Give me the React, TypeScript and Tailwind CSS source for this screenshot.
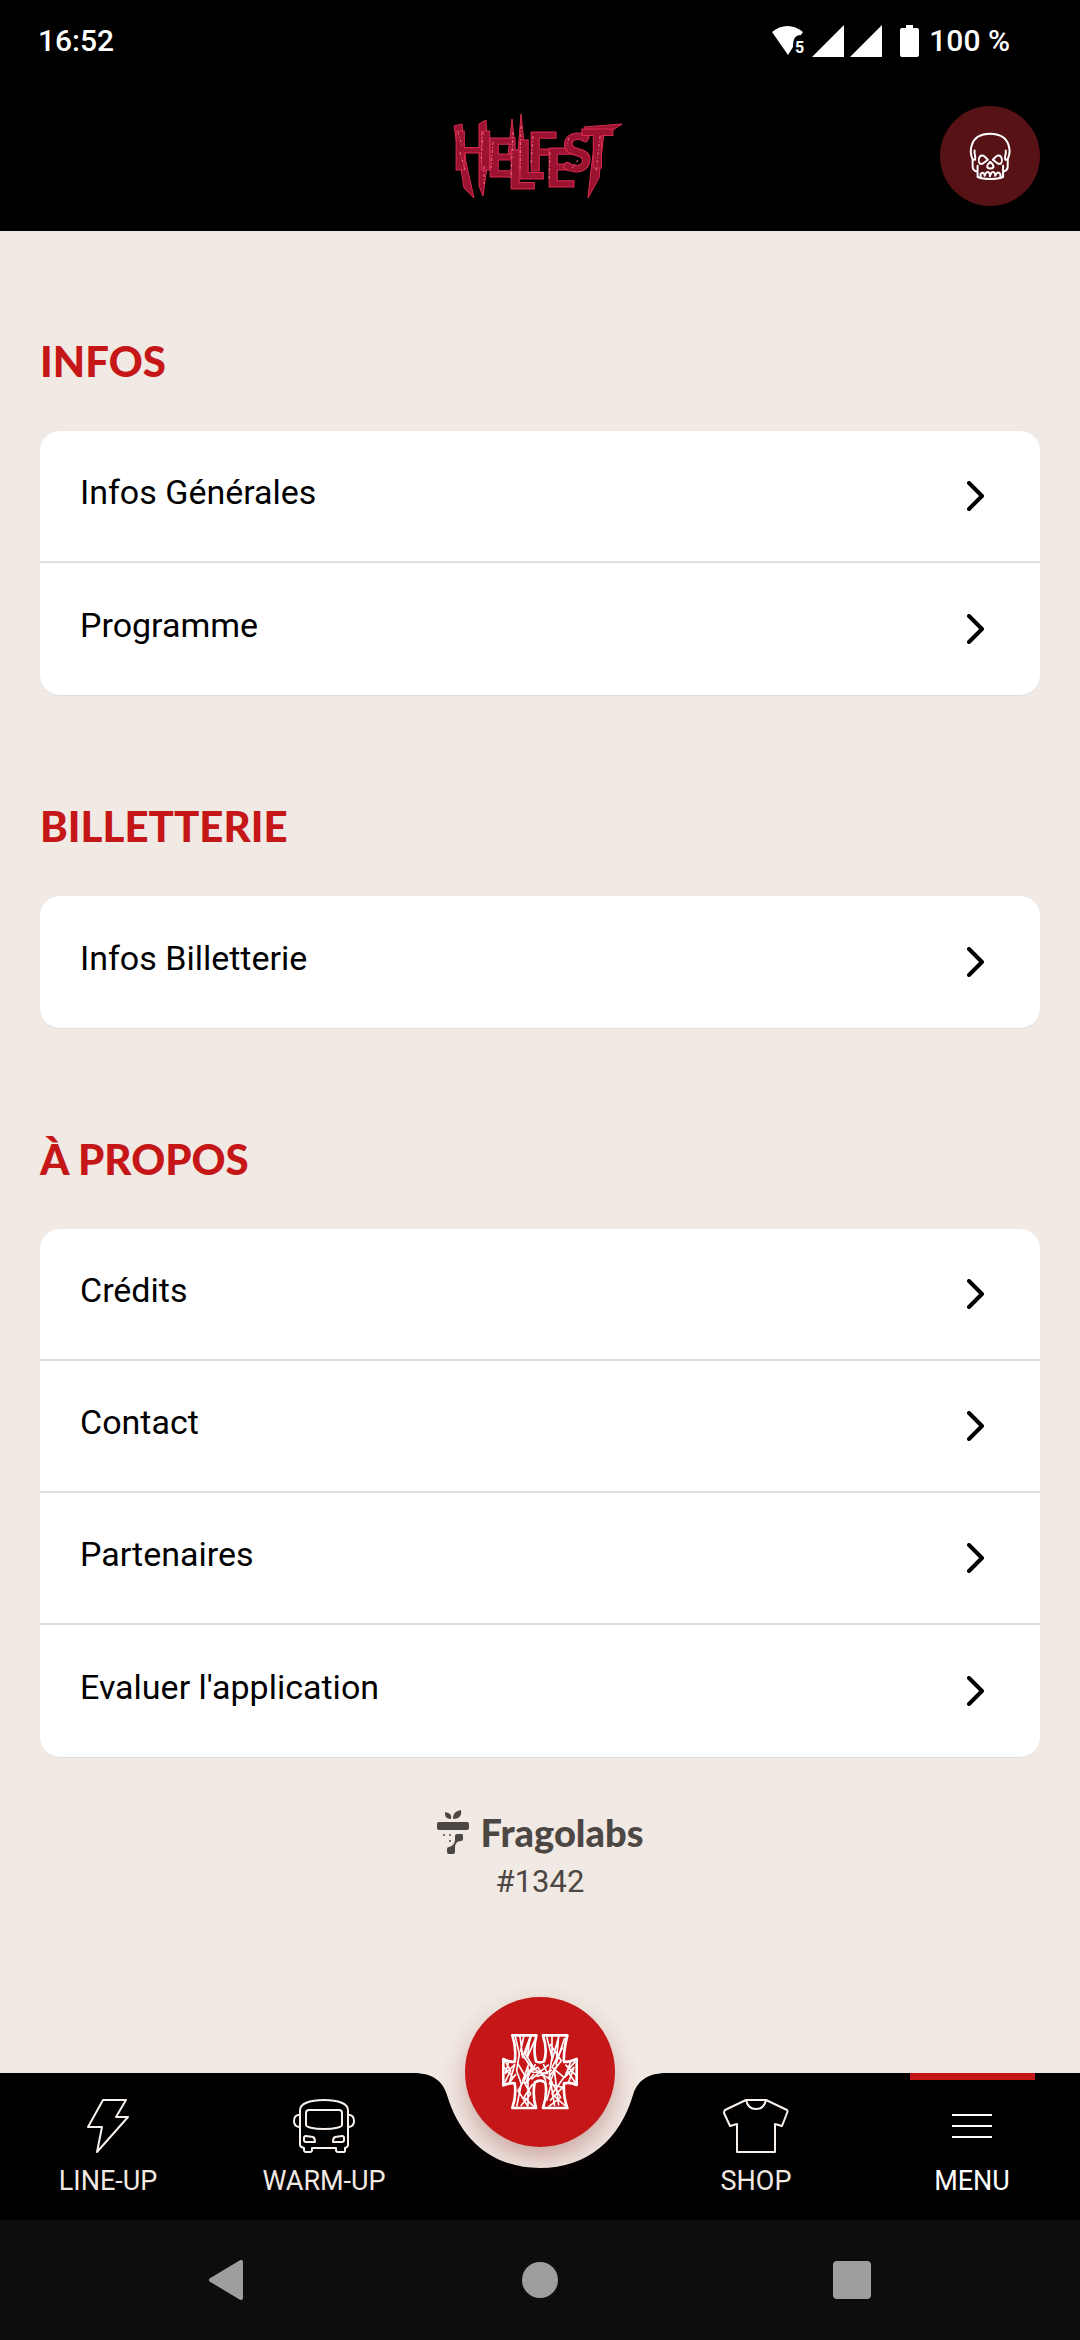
import { ReactNode } from "react";

const sections = [
  { title: "INFOS", items: ["Infos Générales", "Programme"] },
  { title: "BILLETTERIE", items: ["Infos Billetterie"] },
  { title: "À PROPOS", items: ["Crédits", "Contact", "Partenaires", "Evaluer l'application"] },
];

function StatusBar() {
  return (
    <div className="flex h-[81px] items-center justify-between pl-[38px] pr-[70px] text-[30px] font-medium text-white">
      <span>16:52</span>
      <div className="flex items-center">
        <svg viewBox="0 0 32 32" className="mr-2 h-8 w-8" fill="white">
          <path d="M0 7C9-1 22-1 31 7L29 10C23 10 21 14 21 22L16 30Z" />
          <text x="23" y="28" fontSize="16" fontWeight="700" fontFamily="Roboto, sans-serif">5</text>
        </svg>
        <svg viewBox="0 0 32 32" className="mr-1.5 h-8 w-8" fill="white">
          <path d="M0 32L32 0V32Z" />
        </svg>
        <svg viewBox="0 0 32 32" className="mr-[18px] h-8 w-8" fill="white">
          <path d="M0 32L32 0V32Z" />
        </svg>
        <svg viewBox="0 0 19 32" className="mr-2.5 h-8 w-[19px]" fill="white">
          <path d="M6 0H13V3H17Q19 3 19 5V30Q19 32 17 32H2Q0 32 0 30V5Q0 3 2 3H6Z" />
        </svg>
        <span>100 %</span>
      </div>
    </div>
  );
}

function Wordmark() {
  return (
    <svg viewBox="5 0 170 88" className="h-[88px] w-[170px] overflow-visible" role="img" aria-label="Hellfest">
      <g fill="#9c1231" stroke="#d92c50" strokeWidth="1" strokeLinejoin="round">
        <path d="M4 14L12 12L16 50L24 86L14 76Z" />
        <path d="M29 12L36 8L38 48L33 84L29 74Z" />
        <path d="M58 44L62 7L66 44Z" />
        <path d="M68 40L71 2L75 40Z" />
        <path d="M146 20H154L149 66L138 86L141 58Z" />
        <path d="M134 15L172 12L160 20L136 21Z" />
        <text
          x="2 36 57 66 77 95 112 131"
          y="58 65 77 67 59 75 60 56"
          fontSize="54"
          fontWeight="900"
          fontFamily="Lato, sans-serif"
        >
          HELLFEST
        </text>
      </g>
      {/* scratches over the letters */}
      <path
        d="M8 20L12 34M10 40L15 58M33 20L31 50M34 54V72M43 30L41 56M63 20L61 66M71 14L70 58M83 24L81 52M100 40L99 68M119 26L116 34M128 48L122 56M150 24L146 60"
        fill="none"
        stroke="#ee6a86"
        strokeWidth="1"
        strokeDasharray="3 2 1 2"
      />
    </svg>
  );
}

function SkullIcon() {
  return (
    <svg viewBox="0 0 128 148" className="h-[49px] w-[43px]" fill="none" stroke="white" strokeWidth="6" strokeLinecap="round" strokeLinejoin="round">
      <path d="M10 82C3 70 3 50 8 38C16 14 38 5 62 5C88 5 110 14 118 38C123 52 122 70 116 82" />
      <path d="M16 56C14 68 21 74 17 84H10V104C10 112 16 118 25 120V102M25 120V136C45 144 82 144 102 136V120M102 102V120C110 118 116 112 116 104V84H109C105 74 112 68 110 56" />
      <path d="M32 74C38 68 46 72 50 78L56 84L40 96H32C27 90 28 80 32 74Z" />
      <path d="M95 74C89 68 81 72 77 78L71 84L87 96H95C100 90 99 80 95 74Z" />
      <path d="M63 90C58 94 54 101 54 106C58 112 69 112 73 106C73 101 68 94 63 90Z" />
      <path d="M34 136V128Q40 118 46 128V132L50 124Q56 116 62 126V134L66 124Q72 116 78 126V132L82 126Q88 118 94 128V136" />
    </svg>
  );
}

function Header() {
  return (
    <header className="bg-black">
      <StatusBar />
      <div className="grid h-[150px] grid-cols-[1fr_auto_1fr] items-center px-10">
        <a href="#" className="col-start-2">
          <Wordmark />
        </a>
        <button aria-label="Profil" className="flex h-[100px] w-[100px] items-center justify-center justify-self-end rounded-full bg-[#571216]">
          <SkullIcon />
        </button>
      </div>
    </header>
  );
}

function MenuRow({ label }: { label: string }) {
  return (
    <li className="h-[132px] border-b-2 border-[#dedede] last:border-b-0">
      <a href="#" className="flex h-full items-center justify-between pl-10 pr-[55px]">
        <span className="pb-2 text-[34px] leading-10 text-black">{label}</span>
        <svg viewBox="0 0 18 30" className="h-[30px] w-[18px]" fill="none" stroke="black" strokeWidth="4" strokeLinecap="round" strokeLinejoin="round">
          <path d="M2 2L15 15L2 28" />
        </svg>
      </a>
    </li>
  );
}

function Credits() {
  return (
    <div className="flex flex-col items-center pt-12 text-[#4d4744]">
      <a href="#" className="flex items-center gap-3">
        <svg viewBox="0 0 32 44" className="h-11 w-8" fill="currentColor">
          <path d="M14 9C8 9 8 5 8 2C13 3 15 5 14 9ZM16 9C16 3 19 1 24 0C25 6 22 9 16 9Z" />
          <rect y="12" width="32" height="8" rx="2" />
          <path d="M20 24H25Q26 24 26 26V29Q26 31 24 31C20 31 18 34 18 37V42Q18 44 16 44H12Q10 44 10 42V39Q10 37 12 37C16 36 18 33 18 29V26Q18 24 20 24Z" />
          <circle cx="7" cy="25" r="1" />
          <circle cx="13" cy="25" r="1" />
          <circle cx="13" cy="31" r="1" />
        </svg>
        <span className="font-[Lato,sans-serif] text-[38px] font-black leading-[52px]">Fragolabs</span>
      </a>
      <span className="text-[31px] leading-[48px]">#1342</span>
    </div>
  );
}

function NavItem({ label, active, children }: { label: string; active?: boolean; children: ReactNode }) {
  return (
    <a href="#" aria-current={active ? "page" : undefined} className="flex flex-col items-center">
      <span className={active ? "h-[7px] w-[125px] bg-[#c51718]" : "h-[7px]"} />
      <span className="mt-[18px] flex h-14 items-center">{children}</span>
      <span className={active ? "mt-[11px] text-[27px] leading-8 text-white" : "mt-[11px] text-[27px] leading-8 text-[#f2e9e3]"}>{label}</span>
    </a>
  );
}

function Emblem() {
  return (
    <svg viewBox="0 0 228 228" className="h-[76px] w-[76px]" fill="none" stroke="white" strokeWidth="8" strokeLinejoin="round">
      <path d="M31 4H103C96 32 96 60 102 82Q114 88 126 82C134 60 132 32 123 4H196C190 28 184 52 186 84Q206 84 224 75V153Q206 144 186 148C184 176 188 200 196 222H123C132 196 134 168 130 146Q114 134 98 146C94 168 94 196 102 222H31C40 196 42 172 38 148Q20 146 4 154V75Q20 84 38 84C42 56 40 30 31 4Z" />
      <g strokeWidth="5">
        <path d="M40 8L52 60L44 110L58 150L44 218M54 6L62 70L84 10L76 70L98 20M66 4L56 50L80 90L62 140L90 100L58 60" />
        <path d="M88 6L70 60L92 96L70 150L96 120M48 90L72 130L48 170L78 218M64 140L86 180L56 216M92 150L66 190L96 218M78 100V216" />
        <path d="M134 8L150 70L142 120L158 216M150 4V80L170 8L162 90L188 12M144 30L178 80L140 130L176 190L140 218" />
        <path d="M182 40L150 100L186 130L150 180L190 216M166 90L142 150L182 160L144 200M156 100L170 214M134 200L150 140" />
        <path d="M84 96L144 136M88 136L140 92M100 90L90 114L136 118L124 90M104 128L150 108M82 114L108 100L132 140" />
        <path d="M8 80L26 110L8 146M20 84L10 118L38 92L22 146L42 120M6 100L34 130M220 82L196 110L220 146M206 84L188 130L216 100L200 144M190 92L222 124" />
      </g>
    </svg>
  );
}

function BottomNav() {
  return (
    <nav className="relative grid h-[147px] grid-cols-5 bg-black">
      {/* notch cut into the bar, under the round button */}
      <svg viewBox="0 0 280 96" className="absolute left-1/2 top-0 h-24 w-[280px] -translate-x-1/2" fill="#f1e9e3">
        <path d="M13 0C34 0 43 9 47 22C60 66 92 95 140 95C188 95 220 66 233 22C237 9 246 0 267 0Z" />
      </svg>
      <NavItem label="LINE-UP">
        <svg viewBox="0 0 42 56" className="h-14 w-[42px]" fill="none" stroke="#f8f1ec" strokeWidth="2" strokeLinejoin="round">
          <path d="M16 2H39L29 19H41L10 54L15 29H1Z" />
        </svg>
      </NavItem>
      <NavItem label="WARM-UP">
        <svg viewBox="0 0 62 56" className="h-14 w-[62px]" fill="none" stroke="#f8f1ec" strokeWidth="2" strokeLinejoin="round" strokeLinecap="round">
          <path d="M7 47V12C7 6 16 2 31 2S55 6 55 12V47Q55 49 52 50V53Q52 54 50 54H45Q43 54 43 52V50H19V52Q19 54 17 54H13Q11 54 11 52V50Q7 49 7 47Z" />
          <path d="M16 12H46Q49 12 49 15V27C49 29 42 31 31 31S13 29 13 27V15Q13 12 16 12Z" />
          <path d="M7 17H5Q1 18 1 23Q1 29 7 29M55 17H57Q61 18 61 23Q61 29 55 29" />
          <path d="M13 38L20 39Q22 40 22 44H13Q11 44 11 42V40Q11 38 13 38ZM49 38L42 39Q40 40 40 44H49Q51 44 51 42V40Q51 38 49 38Z" />
        </svg>
      </NavItem>
      <div className="flex justify-center">
        <button aria-label="Accueil" className="relative -top-[76px] flex h-[150px] w-[150px] items-center justify-center rounded-full bg-[#c51718] shadow-[0_12px_24px_rgba(140,50,50,0.35)]">
          <Emblem />
        </button>
      </div>
      <NavItem label="SHOP">
        <svg viewBox="0 0 66 56" className="h-14 w-[66px]" fill="none" stroke="#f8f1ec" strokeWidth="2" strokeLinejoin="round">
          <path d="M23 2H43L64 12Q65 13 64 15L59 28L52 26V54H14V26L7 28L1 15Q1 13 2 12Z" />
          <path d="M23 2Q25 11 33 11T43 2" />
        </svg>
      </NavItem>
      <NavItem label="MENU" active>
        <svg viewBox="0 0 40 26" className="h-[26px] w-10" stroke="white" strokeWidth="2">
          <path d="M0 2H40M0 13H40M0 24H40" />
        </svg>
      </NavItem>
    </nav>
  );
}

function SystemBar() {
  return (
    <div className="grid h-[120px] grid-cols-3 items-center justify-items-center bg-[#0d0d0d] px-[72px]">
      <button aria-label="Retour">
        <svg viewBox="0 0 38 40" className="h-10 w-[38px]" fill="#9e9e9e" stroke="#9e9e9e" strokeWidth="4" strokeLinejoin="round">
          <path d="M2 20L32 2V38Z" />
        </svg>
      </button>
      <button aria-label="Écran d'accueil" className="h-9 w-9 rounded-full bg-[#9e9e9e]" />
      <button aria-label="Applications récentes" className="h-[38px] w-[38px] rounded bg-[#9e9e9e]" />
    </div>
  );
}

export default function App() {
  return (
    <div className="flex min-h-screen flex-col bg-[#f1e9e3] font-[Roboto,sans-serif]">
      <Header />
      <main className="flex-1 px-10">
        {sections.map((section) => (
          <section key={section.title}>
            <h2 className="pb-10 pt-[100px] font-[Lato,sans-serif] text-[42px] font-black leading-[60px] text-[#c51718]">
              {section.title}
            </h2>
            <ul className="overflow-hidden rounded-[20px] border-b border-[#dedede] bg-white">
              {section.items.map((item) => (
                <MenuRow key={item} label={item} />
              ))}
            </ul>
          </section>
        ))}
        <Credits />
      </main>
      <BottomNav />
      <SystemBar />
    </div>
  );
}
